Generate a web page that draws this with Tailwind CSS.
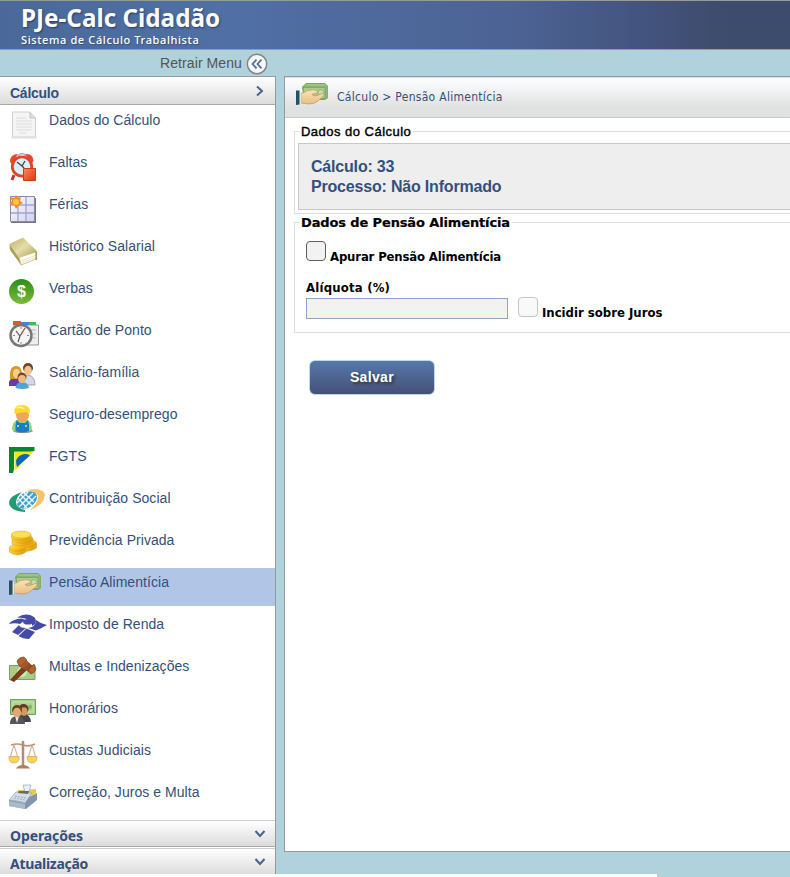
<!DOCTYPE html>
<html lang="pt-BR">
<head>
<meta charset="utf-8">
<title>PJe-Calc Cidadão</title>
<script src="https://cdn.jsdelivr.net/npm/@tailwindcss/browser@4"></script>
</head>
<body class="h-[877px] w-[790px] overflow-hidden bg-[#b0d2dc] font-['Liberation_Sans',sans-serif]">
<svg width="0" height="0" class="absolute">
  <defs>
    <linearGradient id="gold" x1="0" y1="0" x2="1" y2="1"><stop offset="0" stop-color="#ffe868"/><stop offset=".55" stop-color="#f6be1c"/><stop offset="1" stop-color="#c77f05"/></linearGradient>
    <linearGradient id="book" x1="0" y1="0" x2="1" y2="1"><stop offset="0" stop-color="#b9ae67"/><stop offset=".5" stop-color="#e6deaa"/><stop offset="1" stop-color="#a99c52"/></linearGradient>
    <linearGradient id="green" x1="0" y1="0" x2="0" y2="1"><stop offset="0" stop-color="#2f8d1c"/><stop offset="1" stop-color="#79bb35"/></linearGradient>
    <linearGradient id="cell" x1="0" y1="0" x2="1" y2="1"><stop offset="0" stop-color="#fff"/><stop offset="1" stop-color="#d0d0f2"/></linearGradient>
    <linearGradient id="red" x1="0" y1="0" x2="1" y2="1"><stop offset="0" stop-color="#ff8a5c"/><stop offset="1" stop-color="#e03410"/></linearGradient>
    <linearGradient id="skin" x1="0" y1="0" x2="0" y2="1"><stop offset="0" stop-color="#fce3b8"/><stop offset="1" stop-color="#e9bd83"/></linearGradient>
    <linearGradient id="wood" x1="0" y1="0" x2="1" y2="1"><stop offset="0" stop-color="#c77b42"/><stop offset="1" stop-color="#6b3010"/></linearGradient>
    <g id="hand">
      <path d="M15 9L19 5H38L41 8V20L38 22H17Z" fill="#7da565"/>
      <path d="M16.500 9.500H38V20.500H16.500Z" fill="#a9cd8c" stroke="#7ca667" stroke-width=".8"/>
      <path d="M19 6H38L40 8.500H17Z" fill="#9ac483"/>
      <path d="M38.500 9L40.500 8V19.500L38.500 21Z" fill="#90b778"/>
      <circle cx="34" cy="14.500" r="3" fill="#c2dda8" stroke="#82aa68" stroke-width=".7"/>
      <path d="M14 15.500Q17 15 20 12.800Q26 11 30 12.500Q32 14.500 29 15.200L25 16.500Q27 18.500 30 17.500L35 15.500Q38.500 15.500 36 18.500L31 23Q27 26.500 21 26L14 25Z" fill="url(#skin)" stroke="#c0935c" stroke-width=".7"/>
      <path d="M12.500 14H14.200V26H12.500Z" fill="#dbe8ec"/>
      <path d="M9 12.500H12.500V26.500L9 27Z" fill="#28505f"/>
    </g>
  </defs>
</svg>
<div class="flex h-full flex-col">
  <header class="h-[50px] shrink-0 border-y border-[#999] bg-[linear-gradient(90deg,#4a699a_0%,#5070a5_28%,#4c6394_65%,#465986_76%,#3d4b6c_92%)] pl-[21px] text-white">
    <div class="mt-[1px] h-[31px] origin-left scale-x-[0.97] whitespace-nowrap font-['Noto_Sans',sans-serif] text-[25px] leading-[30px] font-bold [text-shadow:1px_1px_2px_#293d62]">PJe-Calc Cidadão</div>
    <div class="whitespace-nowrap font-['Noto_Sans',sans-serif] text-[11px] leading-[13px] font-medium tracking-[0.620px] [text-shadow:1px_1px_1px_#35517e]">Sistema de Cálculo Trabalhista</div>
  </header>
  <div class="flex min-h-0 flex-1 items-start">
    <aside class="w-[276px] shrink-0">
      <div class="flex h-[26px] items-center justify-end gap-[4px] pr-[8px] text-[14px] tracking-[0.090px] text-[#555]">
        <span class="whitespace-nowrap">Retrair Menu</span>
        <svg width="22" height="22" viewBox="0 0 22 22" class="mt-[2px]"><circle cx="11" cy="11" r="9.700" fill="#f7f8fb" stroke="#858585" stroke-width="1.500"/><path d="M10.500 6.700L6.500 11L10.500 15.300M15.500 6.700L11.500 11L15.500 15.300" fill="none" stroke="#536f9e" stroke-width="1.800"/></svg>
      </div>
      <nav class="border-t border-r border-[#999] bg-white">
        <div class="flex h-[28px] items-center justify-between border-b border-[#aaa] bg-linear-to-b from-white to-[#dcdcdc] pr-[10px] pl-[10px] text-[#34507c]">
          <span class="pt-[5px] text-[14px] font-bold tracking-[-0.250px]">Cálculo</span>
          <svg width="10" height="12" viewBox="0 0 10 12"><path d="M2 1.500L7 6L2 10.500" fill="none" stroke="#47638f" stroke-width="2"/></svg>
        </div>
        <ul class="flex h-[715px] flex-col gap-[4px] pt-px text-[14px] tracking-[0.050px] text-[#33507c]">
          <li class="flex h-[38px] shrink-0"><svg width="49" height="38"><path d="M12.500 6H30L35.500 12V31H12.500Z" fill="#f5f5f5" stroke="#cfcfcf"/><path d="M30 6V12H35.500" fill="#ddd" stroke="#c4c4c4"/><path d="M16 12H26M16 15H32M16 18H32M16 21H32M16 24H32M19 27H26" stroke="#dcdcdc"/><path d="M11 32H37" stroke="#ddd"/></svg><span class="pt-[4px]">Dados do Cálculo</span></li>
          <li class="flex h-[38px] shrink-0"><svg width="49" height="38"><path d="M14 27L12 32M30 29L34 32" stroke="#b33" stroke-width="3"/><path d="M10 14Q10 6 18 6L12 16ZM25 6Q33 5 33.500 13L31 16Z" fill="#e64b2c"/><path d="M18 8Q22 3 26 8" fill="none" stroke="#aaa" stroke-width="1.500"/><circle cx="22" cy="18.500" r="9.700" fill="#d8f0f8" stroke="#e2452a" stroke-width="2.800"/><path d="M17 14L22 18L25 13M22 18L24 20" fill="none" stroke="#444" stroke-width="1.300"/><path d="M23.500 20.500H35.500V32.500H23.500Z" fill="url(#red)" stroke="#cf3b17"/></svg><span class="pt-[4px]">Faltas</span></li>
          <li class="flex h-[38px] shrink-0"><svg width="49" height="38"><path d="M11 8H36V33H11Z" fill="#777"/><path d="M10.500 6.500H34.500V31.500H10.500Z" fill="url(#cell)" stroke="#8889ab"/><path d="M18 7V31M26 7V31M11 15H34M11 23H34" stroke="#a4a4ca" stroke-width="1.300"/><path d="M16 5L18 8L21 7L20 11L23 13L19 15L16 19L14 15L9 14L12 11L10 7L14 8Z" fill="#f98731"/><circle cx="16" cy="12" r="3" fill="#ffc93b"/></svg><span class="pt-[4px]">Férias</span></li>
          <li class="flex h-[38px] shrink-0"><svg width="49" height="38"><path d="M9.500 12L19 25L21 33L10 18Z" fill="#aea15a"/><path d="M19 25L36 19V27L21 33Z" fill="#fffdf4" stroke="#b7aa6c" stroke-width=".7"/><path d="M21 29L35 23.500M21 31L35 25.500" stroke="#ddd8bd" stroke-width=".7"/><path d="M9.500 12L23 5.500L36 18L36.500 20L19 26Z" fill="url(#book)"/><path d="M35.500 19L37 20V28L35.500 28Z" fill="#a99c52"/></svg><span class="pt-[4px]">Histórico Salarial</span></li>
          <li class="flex h-[38px] shrink-0"><svg width="49" height="38"><circle cx="21.500" cy="17.500" r="12.500" fill="url(#green)"/><text x="21.500" y="23.300" text-anchor="middle" fill="#fff" font-size="16" font-weight="bold" font-family="Liberation Sans">$</text></svg><span class="pt-[4px]">Verbas</span></li>
          <li class="flex h-[38px] shrink-0"><svg width="49" height="38"><path d="M14 9H38.500V29H14Z" fill="#eee" stroke="#999"/><path d="M13 5H21V9H13Z" fill="#e65728"/><path d="M21 6H29V9H21Z" fill="#3788e0"/><path d="M29 6H36V9H29Z" fill="#48ba4a"/><path d="M28 14H36M33 18H36M33 22H36" stroke="#bbb"/><circle cx="21" cy="19.500" r="10.500" fill="#f5f5f5" stroke="#777" stroke-width="2.500"/><path d="M21 11V13M21 26V28M13 19.500H15M27 19.500H29" stroke="#888"/><path d="M16 15L20 20L25 12M20 20L18 26" fill="none" stroke="#555" stroke-width="1.200"/><path d="M20 20L25 12" stroke="#c65b47"/></svg><span class="pt-[4px]">Cartão de Ponto</span></li>
          <li class="flex h-[38px] shrink-0"><svg width="49" height="38"><path d="M9 28V24Q10 20 15 20T21 24V28Z" fill="#6b3aa4"/><path d="M22 26Q22 18 28 17Q35 18 35 27H25Z" fill="#d7d7e5" stroke="#888aa4" stroke-width=".7"/><path d="M10 21Q9 8 16 8T22 21Z" fill="#d69b24"/><ellipse cx="16.500" cy="15.500" rx="3.500" ry="4.800" fill="#f6cb8f"/><circle cx="28" cy="10" r="5" fill="#704425"/><ellipse cx="28" cy="12.500" rx="3.800" ry="4.700" fill="#f2c28c"/><path d="M15.500 30Q16 24 22 24T29 30Q22 32 15.500 30Z" fill="#54a3dd"/><circle cx="22" cy="19" r="4.500" fill="#75482c"/><ellipse cx="22" cy="21" rx="3.800" ry="4" fill="#f0ba7c"/></svg><span class="pt-[4px]">Salário-família</span></li>
          <li class="flex h-[38px] shrink-0"><svg width="49" height="38"><ellipse cx="23" cy="31" rx="10" ry="2" fill="#999"/><path d="M12 30Q12 19 22 19T32 30Q22 34 12 30Z" fill="#8fda6b"/><path d="M15.500 31V25Q16 23 16.500 20L20 23H25L28 20L29 25V31Q22 34 15.500 31Z" fill="#167fc1"/><circle cx="18" cy="26" r="1" fill="#ffe55c"/><circle cx="26" cy="26" r="1" fill="#ffe55c"/><ellipse cx="22.500" cy="15" rx="6.500" ry="7" fill="#eea65b"/><path d="M14.500 14Q13 5 22 5T29.500 13Q24 11 14.500 14Z" fill="#fbd92c"/><path d="M17 8Q21 6 24 9" fill="none" stroke="#fff6a0" stroke-width="1.500"/></svg><span class="pt-[4px]">Seguro-desemprego</span></li>
          <li class="flex h-[38px] shrink-0"><svg width="49" height="38"><path d="M9 5H34.500V9L30.500 10H14V27L13 31H9Z" fill="#07882d"/><path d="M14.500 9.500H33.500L14.500 29Z" fill="#f5e51b"/><path d="M17 25Q14 16 21 13Q26 11 30 13.500Z" fill="#0868b8"/></svg><span class="pt-[4px]">FGTS</span></li>
          <li class="flex h-[38px] shrink-0"><svg width="49" height="38"><ellipse cx="27" cy="16" rx="11" ry="7.500" transform="rotate(-35 27 16)" fill="#3d9fd3"/><path d="M18 14L27 24M21 11L32 22M24 9L34 18M16 20L28 8M19 23L33 9M24 24L36 12" stroke="#f1faff" stroke-width="1.300"/><path d="M22 8Q9 12 9 19Q10 27 25 28V26Q16 24 16 18Q17 12 22 8Z" fill="#239b72"/><path d="M26 6Q44 3 45 11Q44 21 30 26Q39 18 38 12Q36 7 26 6Z" fill="#f8c265"/></svg><span class="pt-[4px]">Contribuição Social</span></li>
          <li class="flex h-[38px] shrink-0"><svg width="49" height="38" fill="url(#gold)" stroke="#dd9f1b" stroke-width=".5"><path d="M19 19V23Q28 28 36.500 22V17Z"/><ellipse cx="28" cy="17.500" rx="8.500" ry="4"/><path d="M9.500 22V26Q17 32 26 26V22Z"/><ellipse cx="17.500" cy="22" rx="8.300" ry="3.800"/><path d="M12 14V18Q21 23 33 17V13Z"/><ellipse cx="22.500" cy="13" rx="10.500" ry="4.500"/><path d="M11.500 9V12Q20 17 31 12V9Z"/><ellipse cx="21.200" cy="8.500" rx="9.800" ry="3.500" fill="#ffe14b"/></svg><span class="pt-[4px]">Previdência Privada</span></li>
          <li class="flex h-[38px] shrink-0 bg-[#b1c5e7]"><svg width="49" height="38"><use href="#hand"/></svg><span class="pt-[4px]">Pensão Alimentícia</span></li>
          <li class="flex h-[38px] shrink-0"><svg width="49" height="38" fill="#454aa6"><path d="M9 14Q12 9 22 8.500L25 10L20 14Q15 12.500 9 14Z"/><path d="M17 7.500Q26 2 34 7Q37 10 35 14L32 16Q33 8 17 7.500Z"/><ellipse cx="28" cy="11.800" rx="5" ry="2.800"/><path d="M36 10Q41 14 47 15Q40 19 36 20.500L28 18Q36 17 36 10Z"/><path d="M19 15Q20 18 26 18L18 25L12 22Z"/><path d="M26.500 18.500L35 22L29 29Q23 29 18.500 26Z"/></svg><span class="pt-[4px]">Imposto de Renda</span></li>
          <li class="flex h-[38px] shrink-0"><svg width="49" height="38"><path d="M9.500 13.500H35V27.500H9.500Z" fill="#a7cd89" stroke="#78a35d"/><ellipse cx="22" cy="20" rx="5" ry="5" fill="#d0e8ba"/><path d="M22 15L27 18L14 30L10 28Z" fill="#7a3d17"/><path d="M17 9L23 5L36 17L31 22L26 18L20 15Z" fill="url(#wood)"/><path d="M17 10Q18 5 24 5L27 8L20 15ZM28 18L34 12L36 17Q35 21 31 22Z" fill="#ae632f" stroke="#80431c" stroke-width=".6"/></svg><span class="pt-[4px]">Multas e Indenizações</span></li>
          <li class="flex h-[38px] shrink-0"><svg width="49" height="38"><path d="M10.500 5.500H35.500V20.500H10.500Z" fill="#a9d28d" stroke="#71a35b"/><path d="M13 8H33V18H13Z" fill="none" stroke="#c5e3b3"/><circle cx="30" cy="13" r="2" fill="#7fb267"/><path d="M18 28Q18 20 24 20T31 28Z" fill="#43454a"/><circle cx="23.500" cy="15" r="5" fill="#62391d"/><ellipse cx="24" cy="17.500" rx="3.500" ry="4.300" fill="#d49861"/><path d="M10 30Q10 22 17 22T25 30Z" fill="#55575b"/><path d="M15 22L17 29L19 22Z" fill="#eee"/><circle cx="17" cy="16" r="5" fill="#6d4124"/><ellipse cx="17" cy="18.500" rx="4" ry="4.800" fill="#e1aa70"/></svg><span class="pt-[4px]">Honorários</span></li>
          <li class="flex h-[38px] shrink-0"><svg width="49" height="38"><path d="M11 9Q17 7 23 9Q29 11 35 8" fill="none" stroke="#c39673" stroke-width="1.700"/><path d="M14 9L10 22M14 9L18 22M32 9L28 22M32 9L36 22" stroke="#d0a98a"/><path d="M23 5V30" stroke="#b98a6c" stroke-width="2.500"/><path d="M16 32.500Q18 29 23 29T30 32.500Z" fill="#b17e5b"/><path d="M9 20.500H19Q19.500 27 14 27T9 20.500ZM27 20.500H37Q37 27 32 27T27 20.500Z" fill="#fbd656" stroke="#dea55e" stroke-width=".8"/></svg><span class="pt-[4px]">Custas Judiciais</span></li>
          <li class="flex h-[38px] shrink-0"><svg width="49" height="38"><path d="M9 22L29 19L37 15V22L26 31L9 28Z" fill="#8195ac"/><path d="M18 12L36 11L36 16L28 19L15 17Z" fill="#e9c95f"/><path d="M23 7H31L29 14H25Z" fill="#e8eff5" stroke="#9fb0bf" stroke-width=".8"/><path d="M16 14L32 15L25 25L9 22Z" fill="#d5dee8" stroke="#93a4b7" stroke-width=".7"/><path d="M19 13H29L28 16L18 15Z" fill="#60724f"/><path d="M15 18L26 20M14 20L25 22M12 22L23 24" stroke="#9babbe" stroke-dasharray="2 1"/><path d="M9 23L25 26V31L9 28Z" fill="#a9bac9"/></svg><span class="pt-[4px]">Correção, Juros e Multa</span></li>
        </ul>
        <div class="mb-px flex h-[27px] items-center justify-between border-y border-t-[#ccc] border-b-[#aaa] bg-linear-to-b from-white to-[#dcdcdc] pr-[9px] pl-[10px] text-[#34507c]">
          <span class="pt-[4px] font-['Noto_Sans',sans-serif] text-[14px] font-bold tracking-[-0.120px]">Operações</span>
          <svg width="12" height="10" viewBox="0 0 12 10"><path d="M1.500 2L6 7L10.500 2" fill="none" stroke="#47638f" stroke-width="2"/></svg>
        </div>
        <div class="flex h-[26px] items-center justify-between border-t border-[#ccc] bg-linear-to-b from-white to-[#dcdcdc] pr-[9px] pl-[10px] text-[#34507c]">
          <span class="pt-[4px] font-['Noto_Sans',sans-serif] text-[14px] font-bold tracking-[-0.300px]">Atualização</span>
          <svg width="12" height="10" viewBox="0 0 12 10"><path d="M1.500 2L6 7L10.500 2" fill="none" stroke="#47638f" stroke-width="2"/></svg>
        </div>
      </nav>
    </aside>
    <main class="mt-[26px] ml-[8px] h-[776px] flex-1 border border-r-0 border-[#999] bg-white">
      <div class="flex h-[41px] items-center border-t border-b border-t-[#ddd] border-b-[#c8c8c8] bg-linear-to-b from-[#fafbfd] from-10% to-[#e0e2e1] to-75%">
        <svg width="34" height="26" viewBox="9 4 34 26" class="mt-[-5px] ml-[11px]"><use href="#hand"/></svg>
        <span class="mt-[-2px] ml-[7px] font-['DejaVu_Sans_Condensed','DejaVu_Sans',sans-serif] text-[12px] tracking-[0.290px] whitespace-nowrap text-[#34507c]">Cálculo &gt; Pensão Alimentícia</span>
      </div>
      <fieldset class="mt-[5px] ml-[9px] h-[91px] border border-r-0 border-[#ddd] pl-[3px]">
        <legend class="ml-[1px] h-[17px] px-[2px] text-[13px] leading-[17px] tracking-[0.480px] whitespace-nowrap text-black [-webkit-text-stroke:0.400px_#000]">Dados do Cálculo</legend>
        <div class="mt-[3px] h-[67px] border border-r-0 border-[#c8c8c8] bg-[#eee] pt-[13px] pl-[12px] text-[16px] leading-[20px] font-bold tracking-[-0.190px] text-[#34507c]">
          <div>Cálculo: 33</div>
          <div>Processo: Não Informado</div>
        </div>
      </fieldset>
      <fieldset class="ml-[9px] h-[119px] border border-r-0 border-[#ddd] pl-[11px] font-['DejaVu_Sans_Condensed','DejaVu_Sans',sans-serif] text-[13px] font-bold text-black">
        <legend class="-ml-[7px] h-[17px] px-[2px] font-['DejaVu_Sans',sans-serif] text-[13px] leading-[17px] tracking-[-0.130px] whitespace-nowrap [-webkit-text-stroke:0.200px_#000]">Dados de Pensão Alimentícia</legend>
        <div class="mt-[10px] flex h-[26px] gap-[4px]">
          <input type="checkbox" class="size-[20px] shrink-0 appearance-none rounded-[4px] border border-[#5f5f5f] bg-[#f2f2f2]">
          <span class="pt-[6px] leading-[20px] tracking-[-0.160px] whitespace-nowrap">Apurar Pensão Alimentícia</span>
        </div>
        <div class="mt-[10px] h-[20px] leading-[22px] tracking-[0.200px]">Alíquota (%)</div>
        <div class="flex">
          <input type="text" disabled class="mt-[1px] h-[21px] w-[202px] border border-[#8ba5c5] bg-[#f2f3ee]">
          <input type="checkbox" disabled class="ml-[10px] size-[20px] shrink-0 appearance-none rounded-[4px] border border-[#c5c5c5] bg-[#f9f9f9]">
          <span class="ml-[4px] h-[22px] pt-[6px] leading-[20px] whitespace-nowrap">Incidir sobre Juros</span>
        </div>
      </fieldset>
      <button class="mt-[27px] ml-[24px] h-[35px] w-[126px] rounded-[6px] border border-[#b7dce8] bg-linear-to-b from-[#5579aa] to-[#465078] text-[14px] font-bold tracking-[0.350px] text-white [text-shadow:2px_2px_3px_#333]">Salvar</button>
    </main>
  </div>
</div>
<div class="absolute top-[874px] left-0 h-[3px] w-[657px] bg-[#fcfcfc]"></div>
</body>
</html>
